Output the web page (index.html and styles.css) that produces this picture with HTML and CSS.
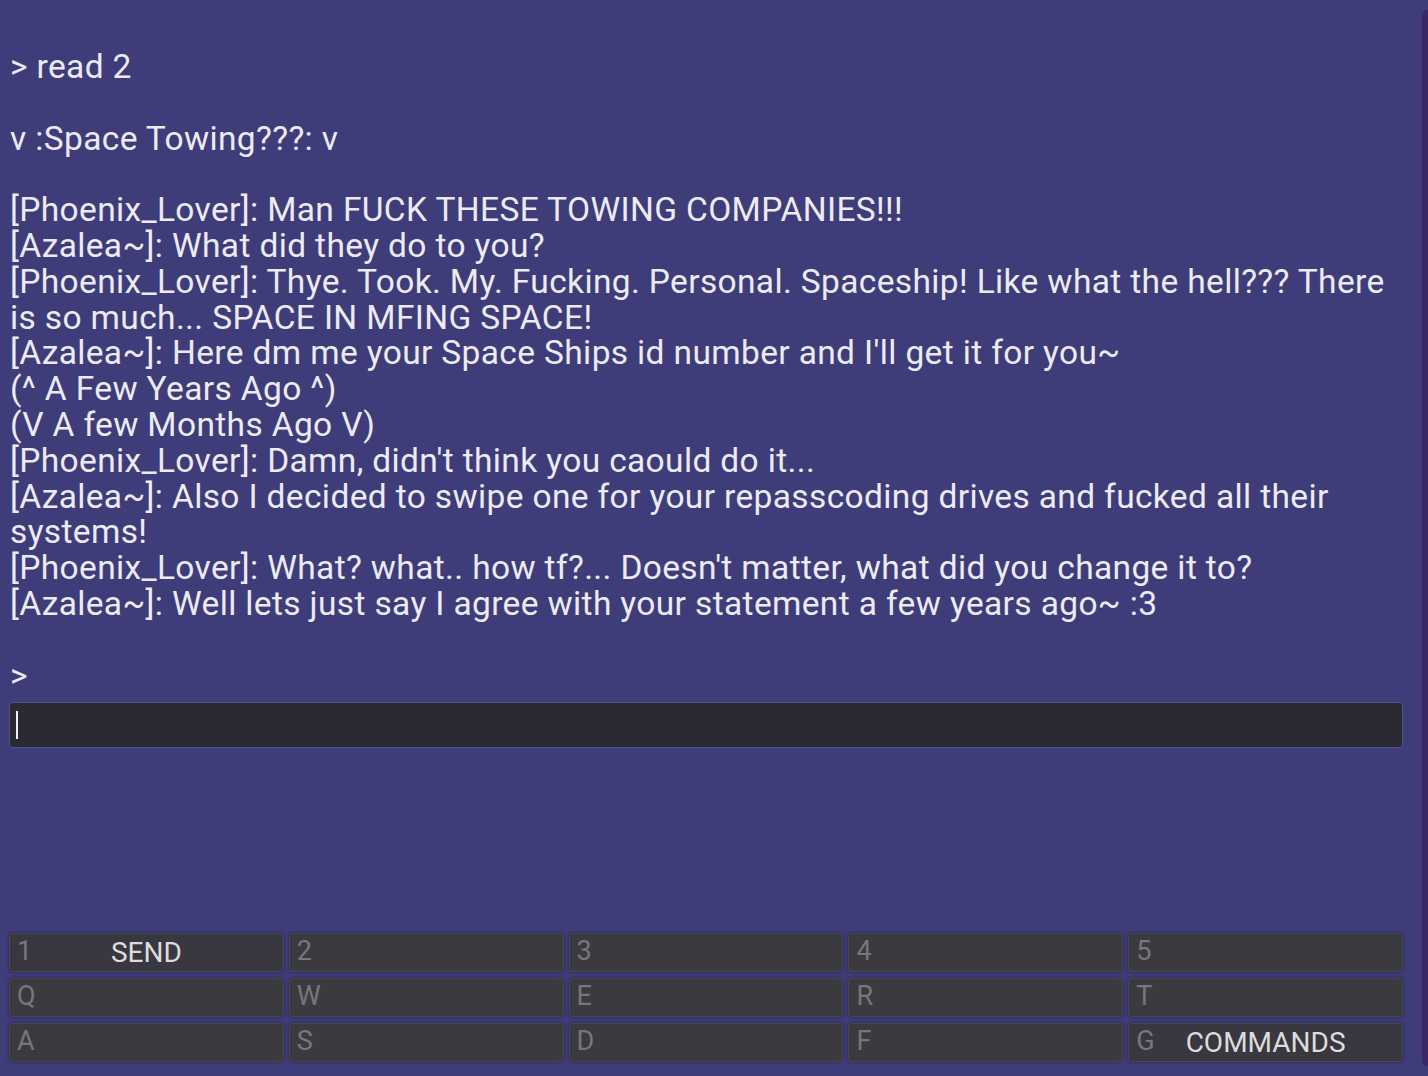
FILE: index.html
```html
<!DOCTYPE html>
<html>
<head>
    <title>Terminal</title>
    <link rel="stylesheet" href="styles.css">
</head>
<body>
    <div class="screen">
        <div class="terminal">
            <div class="log">&gt; read 2<br>
<br>
v :Space Towing???: v<br>
<br>
[Phoenix_Lover]: Man FUCK THESE TOWING COMPANIES!!!<br>
[Azalea~]: What did they do to you?<br>
[Phoenix_Lover]: Thye. Took. My. Fucking. Personal. Spaceship! Like what the hell??? There<br>
is so much... SPACE IN MFING SPACE!<br>
[Azalea~]: Here dm me your Space Ships id number and I'll get it for you~<br>
(^ A Few Years Ago ^)<br>
(V A few Months Ago V)<br>
[Phoenix_Lover]: Damn, didn't think you caould do it...<br>
[Azalea~]: Also I decided to swipe one for your repasscoding drives and fucked all their<br>
systems!<br>
[Phoenix_Lover]: What? what.. how tf?... Doesn't matter, what did you change it to?<br>
[Azalea~]: Well lets just say I agree with your statement a few years ago~ :3<br>
<br>
&gt;</div>
            <div class="input-box"><span class="caret"></span></div>

            <div class="keys">
                <button class="key key-active"><span class="hint">1</span>SEND</button>
                <button class="key"><span class="hint">2</span></button>
                <button class="key"><span class="hint">3</span></button>
                <button class="key"><span class="hint">4</span></button>
                <button class="key"><span class="hint">5</span></button>
                <button class="key"><span class="hint">Q</span></button>
                <button class="key"><span class="hint">W</span></button>
                <button class="key"><span class="hint">E</span></button>
                <button class="key"><span class="hint">R</span></button>
                <button class="key"><span class="hint">T</span></button>
                <button class="key"><span class="hint">A</span></button>
                <button class="key"><span class="hint">S</span></button>
                <button class="key"><span class="hint">D</span></button>
                <button class="key"><span class="hint">F</span></button>
                <button class="key key-active"><span class="hint">G</span>COMMANDS</button>
            </div>
        </div>
        <div class="edge"></div>
    </div>
</body>
</html>
```

FILE: styles.css
```css
html, body {
    margin: 0;
    height: 100%;
}
body {
    background: #3f3c7a;
    color: #ecebf3;
    font-family: Roboto, "Noto Sans", sans-serif;
    overflow: hidden;
}
.screen {
    display: flex;
    height: 100vh;
}
.terminal {
    flex: 1;
    display: flex;
    flex-direction: column;
    padding: 49px 19px 14px 9px;
}
.edge {
    width: 6px;
    margin: 10px 0 10px 0;
    background: #3a2966;
    border-radius: 6px 0 0 6px;
}
.log {
    font-size: 33.5px;
    line-height: 35.8px;
    padding-left: 1px;
    white-space: nowrap;
    letter-spacing: 0.36px;
}
.input-box {
    height: 44px;
    margin-top: 9px;
    background: #2b2a33;
    border: 1px solid #4b5588;
    border-radius: 3px;
    display: flex;
    align-items: center;
    padding-left: 6px;
}
.caret {
    width: 2px;
    height: 28px;
    background: #f2f2f2;
}
.keys {
    margin-top: auto;
    display: grid;
    grid-template-columns: repeat(5, 1fr);
    column-gap: 5px;
    row-gap: 6px;
}
.key {
    position: relative;
    height: 39px;
    background: #3b3b3f;
    border: 1px solid #48484e;
    border-radius: 3px;
    box-shadow: 0 0 3px rgba(20, 18, 50, 0.6);
    color: #dcdcdc;
    font-family: Roboto, "Noto Sans", sans-serif;
    font-size: 28px;
    line-height: 35px;
    padding: 0;
    text-align: center;
}
.key-active {
    background: #39373f;
}
.hint {
    position: absolute;
    left: 7px;
    top: 0;
    color: #77767c;
    font-size: 27px;
}
```
